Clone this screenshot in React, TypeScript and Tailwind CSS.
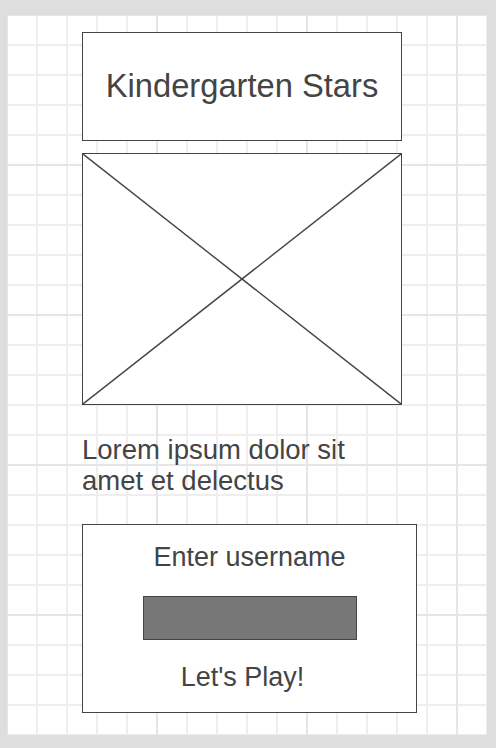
export default function App() {
  return (
    <div className="h-[748px] w-[496px] overflow-hidden bg-[#dedede] pl-[7px] pt-[15px] font-['Liberation_Sans',Arial,sans-serif] text-[#444]">
      <div className="flex h-[720px] w-[480px] flex-col bg-white bg-[linear-gradient(to_right,transparent_148px,#e6e6e6_148px),linear-gradient(to_bottom,transparent_148px,#e6e6e6_148px),linear-gradient(to_right,transparent_28px,#eeeeee_28px),linear-gradient(to_bottom,transparent_28px,#eeeeee_28px)] bg-[size:150px_150px,150px_150px,30px_30px,30px_30px] bg-[position:1px_1px] pl-[75px] pt-[17px]">
        <div className="flex h-[109px] w-[320px] items-center justify-center border border-[#444] bg-white">
          <h1 className="text-[32.7px] leading-none">Kindergarten Stars</h1>
        </div>

        <div className="mt-[12px] h-[252px] w-[320px] border border-[#444] bg-white">
          <svg width="318" height="250" viewBox="0 0 318 250" className="block">
            <line x1="0" y1="0" x2="318" y2="250" stroke="#444" strokeWidth="1.4" />
            <line x1="318" y1="0" x2="0" y2="250" stroke="#444" strokeWidth="1.4" />
          </svg>
        </div>

        <p className="mt-[29px] w-[300px] text-[27.5px] leading-[31.4px]">
          Lorem ipsum dolor sit amet et delectus
        </p>

        <div className="mt-[27px] flex h-[189px] w-[335px] flex-col items-center border border-[#444] bg-white pt-[17px]">
          <p className="text-[27px] leading-[31px]">Enter username</p>
          <div className="mt-[23px] h-[44px] w-[214px] border border-[#444] bg-[#777]" />
          <button type="button" className="mr-[14px] mt-[22px] text-[27px] leading-[31px]">
            Let's Play!
          </button>
        </div>
      </div>
    </div>
  );
}
